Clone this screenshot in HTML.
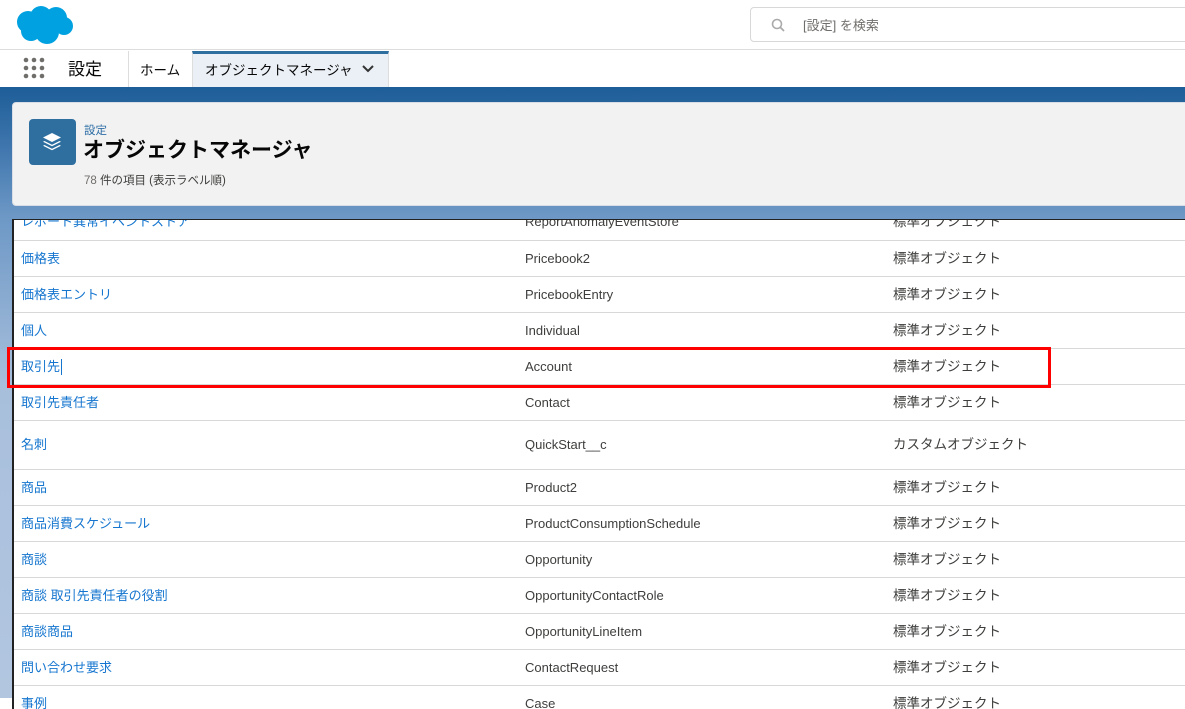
<!DOCTYPE html>
<html><head><meta charset="utf-8"><style>
*{margin:0;padding:0;box-sizing:border-box}
body{width:1185px;height:698px;overflow:hidden;background:#fff;font-family:"Liberation Sans","Noto Sans CJK JP",sans-serif;position:relative}
.hdr{position:absolute;left:0;top:0;width:1185px;height:50px;background:#fff;border-bottom:1px solid #ddd}
.search{position:absolute;left:750px;top:7px;width:440px;height:35px;border:1px solid #d8d8d8;border-radius:4px;background:#fff}
.search span{position:absolute;left:52px;top:7px;font-size:13px;color:#706e6b}
.nav{position:absolute;left:0;top:51px;width:1185px;height:36px;background:#fff}
.bg{position:absolute;left:0;top:87px;width:1185px;height:611px;background:linear-gradient(180deg,#1d5d98 0px,#3f76ad 60px,#6d98c6 130px,#a8bfdc 300px,#b2c6e0 611px)}
.card{position:absolute;left:12px;top:102px;width:1180px;height:104px;background:#f2f2f2;border:1px solid #d8dde6;border-radius:4px}
.tbl{position:absolute;left:12px;top:219px;width:1180px;height:490px;background:#fff;border-left:2px solid #222;border-top:1px solid #222;overflow:hidden}
.row{position:absolute;left:0;width:1180px;border-bottom:1px solid #d8d8d8;font-size:13px}
.row span{position:absolute;top:0;white-space:nowrap}
.a{left:7px;color:#1676cf}.b{left:511px;color:#3e3e3c}.c{left:879px;color:#3e3e3c;font-size:13.5px}
</style></head><body>
<div class="hdr">
<svg style="position:absolute;left:15px;top:4px" width="60" height="42" viewBox="0 0 60 42"><g fill="#00a1e0"><circle cx="13" cy="18" r="11"/><circle cx="26" cy="13" r="11"/><circle cx="41" cy="14" r="11"/><circle cx="49" cy="22" r="9"/><circle cx="32" cy="28" r="12"/><circle cx="16" cy="27" r="10"/></g></svg>
<div class="search"><svg style="position:absolute;left:20px;top:10px" width="14" height="14" viewBox="0 0 14 14"><circle cx="6" cy="6" r="4.5" fill="none" stroke="#aaa" stroke-width="1.6"/><path d="M9.5 9.5L13 13" stroke="#aaa" stroke-width="1.8"/></svg><span>[設定] を検索</span></div>
</div>
<div class="nav">
<svg style="position:absolute;left:23px;top:6px" width="22" height="22" viewBox="0 0 22 22"><g fill="#706e6b"><circle cx="3" cy="3" r="2.3"/><circle cx="11" cy="3" r="2.3"/><circle cx="19" cy="3" r="2.3"/><circle cx="3" cy="11" r="2.3"/><circle cx="11" cy="11" r="2.3"/><circle cx="19" cy="11" r="2.3"/><circle cx="3" cy="19" r="2.3"/><circle cx="19" cy="19" r="2.3"/><circle cx="11" cy="19" r="2.3"/></g></svg>
<div style="position:absolute;left:68px;top:4px;font-size:17px;color:#080707">設定</div>
<div style="position:absolute;left:128px;top:0;width:1px;height:36px;background:#ddd"></div>
<div style="position:absolute;left:140px;top:8px;font-size:13.5px;color:#080707">ホーム</div>
<div style="position:absolute;left:192px;top:0;width:197px;height:36px;background:#eaf0f6;border-top:3px solid #2f6fa0;border-left:1px solid #ddd;border-right:1px solid #ddd"></div>
<div style="position:absolute;left:205px;top:8px;font-size:13.5px;color:#080707">オブジェクトマネージャ</div>
<svg style="position:absolute;left:361px;top:13px" width="14" height="10" viewBox="0 0 14 10"><path d="M2 2l5 5 5-5" fill="none" stroke="#333" stroke-width="2"/></svg>
</div>
<div class="bg"></div>
<div class="card">
<div style="position:absolute;left:16px;top:16px;width:47px;height:46px;background:#2f6fa0;border-radius:4px"></div>
<svg style="position:absolute;left:28px;top:28px" width="22" height="22" viewBox="0 0 22 22"><g fill="#fff"><path d="M11 2l9 4.5-9 4.5-9-4.5z"/><path d="M3.5 10l7.5 3.8 7.5-3.8 1.5 0.8-9 4.5-9-4.5z"/><path d="M3.5 14l7.5 3.8 7.5-3.8 1.5 0.8-9 4.5-9-4.5z"/></g></svg>
<div style="position:absolute;left:71px;top:19px;font-size:11.5px;color:#2e6ea6">設定</div>
<div style="position:absolute;left:70px;top:31px;font-size:21px;font-weight:bold;color:#080707">オブジェクトマネージャ</div>
<div style="position:absolute;left:71px;top:69px;font-size:11.5px;color:#3e3e3c"><span style="color:#706e6b">78</span> 件の項目 (表示ラベル順)</div>
</div>
<div class="tbl">
<div class="row" style="top:-16px;height:37px;line-height:36px"><span class="a">レポート異常イベントストア</span><span class="b">ReportAnomalyEventStore</span><span class="c">標準オブジェクト</span></div>
<div class="row" style="top:21px;height:36px;line-height:35px"><span class="a">価格表</span><span class="b">Pricebook2</span><span class="c">標準オブジェクト</span></div>
<div class="row" style="top:57px;height:36px;line-height:35px"><span class="a">価格表エントリ</span><span class="b">PricebookEntry</span><span class="c">標準オブジェクト</span></div>
<div class="row" style="top:93px;height:36px;line-height:35px"><span class="a">個人</span><span class="b">Individual</span><span class="c">標準オブジェクト</span></div>
<div class="row" style="top:129px;height:36px;line-height:35px"><span class="a">取引先</span><span style="left:47px;top:10px;width:1px;height:16px;background:#1676cf"></span><span class="b">Account</span><span class="c">標準オブジェクト</span></div>
<div class="row" style="top:165px;height:36px;line-height:35px"><span class="a">取引先責任者</span><span class="b">Contact</span><span class="c">標準オブジェクト</span></div>
<div class="row" style="top:201px;height:49px;line-height:48px"><span class="a">名刺</span><span class="b">QuickStart__c</span><span class="c">カスタムオブジェクト</span></div>
<div class="row" style="top:250px;height:36px;line-height:35px"><span class="a">商品</span><span class="b">Product2</span><span class="c">標準オブジェクト</span></div>
<div class="row" style="top:286px;height:36px;line-height:35px"><span class="a">商品消費スケジュール</span><span class="b">ProductConsumptionSchedule</span><span class="c">標準オブジェクト</span></div>
<div class="row" style="top:322px;height:36px;line-height:35px"><span class="a">商談</span><span class="b">Opportunity</span><span class="c">標準オブジェクト</span></div>
<div class="row" style="top:358px;height:36px;line-height:35px"><span class="a">商談 取引先責任者の役割</span><span class="b">OpportunityContactRole</span><span class="c">標準オブジェクト</span></div>
<div class="row" style="top:394px;height:36px;line-height:35px"><span class="a">商談商品</span><span class="b">OpportunityLineItem</span><span class="c">標準オブジェクト</span></div>
<div class="row" style="top:430px;height:36px;line-height:35px"><span class="a">問い合わせ要求</span><span class="b">ContactRequest</span><span class="c">標準オブジェクト</span></div>
<div class="row" style="top:466px;height:36px;line-height:35px"><span class="a">事例</span><span class="b">Case</span><span class="c">標準オブジェクト</span></div>
</div>
<div style="position:absolute;left:7px;top:347px;width:1044px;height:41px;border:3px solid #f00"></div>
</body></html>
